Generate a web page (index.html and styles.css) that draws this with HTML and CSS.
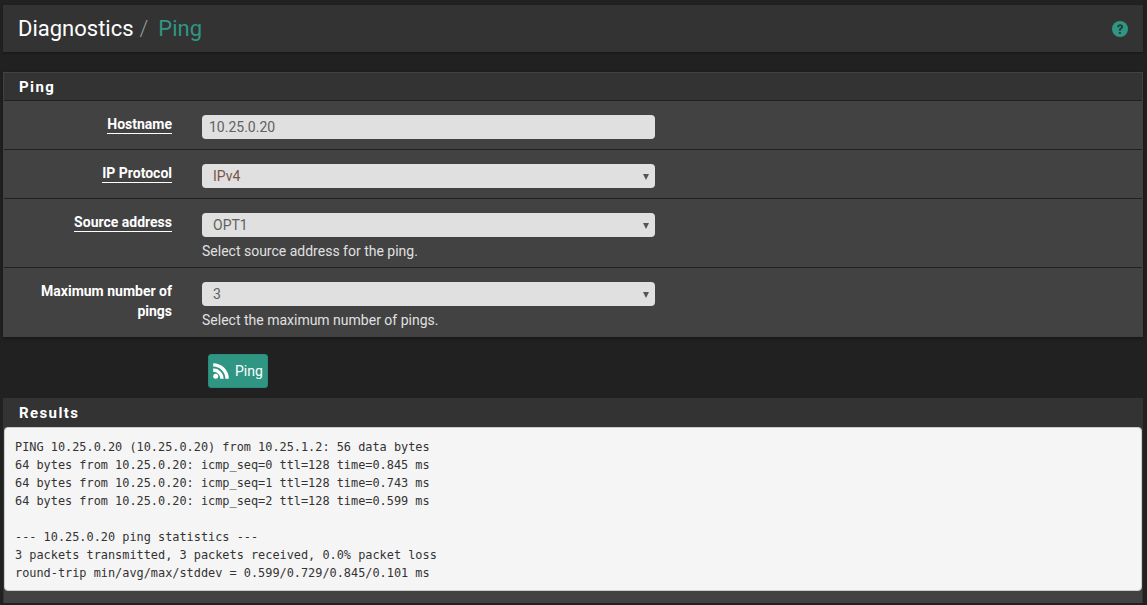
FILE: index.html
```html
<!DOCTYPE html>
<html lang="en">
<head>
<meta charset="utf-8">
<title>Diagnostics: Ping</title>
<link rel="stylesheet" href="styles.css">
</head>
<body>
<header class="page-header">
  <h1 class="crumbs"><span class="crumb-root">Diagnostics</span><span class="crumb-sep">/</span><span class="crumb-leaf">Ping</span></h1>
  <svg class="help" viewBox="0 0 24 24" width="16" height="16" aria-hidden="true"><circle cx="12" cy="12" r="12" fill="#2f9683"/><path d="M7.6 9.2C7.8 6.6 9.6 5 12.2 5c2.700 0 4.500 1.600 4.500 3.800 0 1.700-.9 2.600-2.100 3.400-1 .7-1.300 1-1.300 2v.5h-3v-.8c0-1.700.6-2.500 1.900-3.400.9-.6 1.400-1 1.400-1.600 0-.8-.6-1.300-1.400-1.300-.9 0-1.500.6-1.600 1.600zM10.300 16.500h3v2.900h-3z" fill="#2b3a3a"/></svg>
</header>

<section class="panel form-panel">
  <h2 class="panel-title">Ping</h2>
  <div class="row row-a">
    <div class="label-col"><span class="label link">Hostname</span></div>
    <div class="field-col"><div class="control input">10.25.0.20</div></div>
  </div>
  <div class="row row-a">
    <div class="label-col"><span class="label link">IP Protocol</span></div>
    <div class="field-col"><div class="control select accent">IPv4<span class="caret"></span></div></div>
  </div>
  <div class="row row-b">
    <div class="label-col"><span class="label link">Source address</span></div>
    <div class="field-col"><div class="control select">OPT1<span class="caret"></span></div><p class="hint">Select source address for the ping.</p></div>
  </div>
  <div class="row row-b">
    <div class="label-col"><span class="label">Maximum number of pings</span></div>
    <div class="field-col"><div class="control select">3<span class="caret"></span></div><p class="hint">Select the maximum number of pings.</p></div>
  </div>
</section>

<div class="actions">
  <button class="btn" type="button">
    <svg class="rss" viewBox="0 0 16 16" width="16" height="16" aria-hidden="true"><circle cx="2.700" cy="13.300" r="2.500" fill="#fff"/><path d="M.2 5.300a10.500 10.500 0 0 1 10.500 10.500H7.300A7.100 7.100 0 0 0 .2 8.700z" fill="#fff"/><path d="M.2.200a15.600 15.600 0 0 1 15.600 15.600h-3.400A12.200 12.200 0 0 0 .2 3.600z" fill="#fff"/></svg>
    <span>Ping</span>
  </button>
</div>

<section class="panel results-panel">
  <h2 class="panel-title">Results</h2>
  <pre class="output">PING 10.25.0.20 (10.25.0.20) from 10.25.1.2: 56 data bytes
64 bytes from 10.25.0.20: icmp_seq=0 ttl=128 time=0.845 ms
64 bytes from 10.25.0.20: icmp_seq=1 ttl=128 time=0.743 ms
64 bytes from 10.25.0.20: icmp_seq=2 ttl=128 time=0.599 ms

--- 10.25.0.20 ping statistics ---
3 packets transmitted, 3 packets received, 0.0% packet loss
round-trip min/avg/max/stddev = 0.599/0.729/0.845/0.101 ms</pre>
</section>
</body>
</html>
```

FILE: styles.css
```css
* { box-sizing: border-box; }
html, body { height: 100%; }
body {
  margin: 0;
  padding: 5px 4px 0 3px;
  background: #212121;
  color: #e0e0e0;
  font-family: Roboto, "Liberation Sans", sans-serif;
  font-size: 14px;
  overflow: hidden;
}
.page-header {
  height: 47px;
  background: #333;
  display: flex;
  align-items: center;
  justify-content: space-between;
  padding: 0 15px;
  box-shadow: 0 1px 2px rgba(0,0,0,.3);
}
.crumbs { margin: 0; font-size: 22px; font-weight: 400; line-height: 47px; display: flex; }
.crumb-root { color: #fff; }
.crumb-sep { color: #999; margin: 0 10px 0 6px; font-weight: 300; }
.crumb-leaf { color: #2f9683; font-weight: 400; }
.help { display: block; }
.panel { background: #424242; border: 1px solid #424242; }
.form-panel { margin-top: 20px; height: 265px; box-shadow: 0 1px 3px rgba(0,0,0,.4); }
.panel-title {
  margin: 0;
  height: 28px;
  background: #333;
  color: #fff;
  font-size: 15px;
  font-weight: 700;
  letter-spacing: 1.4px;
  line-height: 28px;
  padding-left: 15px;
  border-bottom: 1px solid #212121;
}
.row { display: flex; border-bottom: 1px solid #212121; padding-top: 14px; }
.row:last-child { border-bottom: 0; height: 68px; }
.row-a { height: 49px; }
.row-b { height: 69px; }
.label-col { width: 168px; margin-top: -1px; text-align: right; padding-left: 30px; line-height: 20px; }
.label { color: #fff; font-weight: 700; font-size: 14px; }
.link { border-bottom: 1px solid #fff; padding-bottom: 1px; }
.field-col { margin-left: 30px; width: 453px; }
.control {
  height: 24px;
  border-radius: 4px;
  background: #e0e0e0;
  color: #616161;
  font-size: 14px;
  line-height: 24px;
  position: relative;
}
.input { padding-left: 7px; }
.select { padding-left: 11px; }
.accent { color: #795548; }
.caret {
  position: absolute;
  right: 6px;
  top: 10px;
  border-left: 3px solid transparent;
  border-right: 3px solid transparent;
  border-top: 6px solid #555;
}
.hint { margin: 4px 0 0; font-size: 14px; line-height: 20px; color: #e0e0e0; }
.actions { padding: 17px 0 0 205px; height: 61px; }
.btn {
  display: flex;
  align-items: center;
  gap: 6px;
  width: 60px;
  height: 34px;
  padding: 0 0 0 4px;
  background: #2f9683;
  border: 1px solid #2b8a78;
  border-radius: 3px;
  color: #fff;
  font: 400 14px/20px Roboto, "Liberation Sans", sans-serif;
}
.rss { display: block; flex: none; }
.results-panel { height: 205px; border-color: #333; border-bottom-color: #424242; }
.results-panel .panel-title { border-bottom: 0; }
.output {
  margin: 0;
  height: 164px;
  background: #f5f5f5;
  border: 1px solid #ccc;
  border-radius: 4px;
  color: #333;
  font-family: "DejaVu Sans Mono", "Liberation Mono", monospace;
  font-size: 11.88px;
  line-height: 18px;
  padding: 10px 10px;
  overflow: hidden;
}
```
